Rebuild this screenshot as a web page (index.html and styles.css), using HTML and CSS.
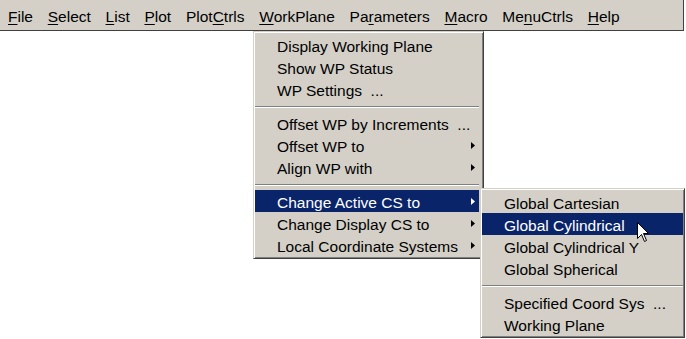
FILE: index.html
```html
<!DOCTYPE html>
<html>
<head>
<meta charset="utf-8">
<link rel="stylesheet" href="styles.css">
</head>
<body>
<div class="menubar">
  <span class="mi"><u>F</u>ile</span>
  <span class="mi"><u>S</u>elect</span>
  <span class="mi"><u>L</u>ist</span>
  <span class="mi"><u>P</u>lot</span>
  <span class="mi">Plot<u>C</u>trls</span>
  <span class="mi"><u>W</u>orkPlane</span>
  <span class="mi">Pa<u>r</u>ameters</span>
  <span class="mi"><u>M</u>acro</span>
  <span class="mi">Me<u>n</u>uCtrls</span>
  <span class="mi"><u>H</u>elp</span>
</div>

<div class="menu dropdown">
  <div class="row">Display Working Plane</div>
  <div class="row">Show WP Status</div>
  <div class="row">WP Settings &nbsp;...</div>
  <div class="sep"></div>
  <div class="row">Offset WP by Increments &nbsp;...</div>
  <div class="row sub">Offset WP to<svg class="arrow" width="4" height="7" viewBox="0 0 4 7"><polygon points="0,0 4,3.5 0,7"/></svg></div>
  <div class="row sub">Align WP with<svg class="arrow" width="4" height="7" viewBox="0 0 4 7"><polygon points="0,0 4,3.5 0,7"/></svg></div>
  <div class="sep"></div>
  <div class="row sub active">Change Active CS to<svg class="arrow" width="4" height="7" viewBox="0 0 4 7"><polygon points="0,0 4,3.5 0,7"/></svg></div>
  <div class="row sub">Change Display CS to<svg class="arrow" width="4" height="7" viewBox="0 0 4 7"><polygon points="0,0 4,3.5 0,7"/></svg></div>
  <div class="row sub">Local Coordinate Systems<svg class="arrow" width="4" height="7" viewBox="0 0 4 7"><polygon points="0,0 4,3.5 0,7"/></svg></div>
</div>

<div class="menu submenu">
  <div class="row">Global Cartesian</div>
  <div class="row active">Global Cylindrical</div>
  <div class="row">Global Cylindrical Y</div>
  <div class="row">Global Spherical</div>
  <div class="sep"></div>
  <div class="row">Specified Coord Sys &nbsp;...</div>
  <div class="row">Working Plane</div>
</div>

<svg class="cursor" width="13" height="21" viewBox="0 0 13 21">
  <path d="M0.5,0.5 L0.5,16.5 L4.5,12.5 L7.5,19.5 L9.5,18.5 L6.5,11.5 L11.5,11.5 Z" fill="#fff" stroke="#000" stroke-width="1" stroke-linejoin="miter"/>
</svg>
</body>
</html>
```
FILE: styles.css
```css
html, body {
  margin: 0;
  padding: 0;
  background: #fff;
}
body {
  font-family: "Liberation Sans", Arial, sans-serif;
  font-size: 15.5px;
  color: #000;
  width: 686px;
  height: 339px;
  overflow: hidden;
  position: relative;
}
.menubar {
  box-sizing: border-box;
  width: 684px;
  height: 31px;
  background: #d4d0c8;
  border-bottom: 1px solid #404040;
  border-right: 1px solid #404040;
  display: flex;
  gap: 14.75px;
  padding: 3px 0 0 8px;
  line-height: 27px;
}
.mi {
  white-space: nowrap;
}
.mi u {
  text-decoration-thickness: 1px;
  text-underline-offset: 2px;
}
.menu {
  position: absolute;
  box-sizing: border-box;
  background: #d4d0c8;
  border: 1px solid;
  border-color: #d4d0c8 #404040 #404040 #d4d0c8;
  box-shadow: inset 1px 1px #fff, inset -1px -1px #808080;
}
.dropdown {
  left: 253px;
  top: 31px;
  width: 231px;
  padding: 2px 4px 2px 1px;
}
.submenu {
  left: 480px;
  top: 188px;
  width: 205px;
  padding: 2px 1px 2px 1px;
}
.row {
  position: relative;
  height: 18px;
  line-height: 18px;
  padding: 4px 0 0 22px;
  white-space: nowrap;
}
.row.active {
  background: #0a246a;
  color: #fff;
}
.arrow {
  position: absolute;
  right: 4px;
  top: 8px;
  fill: #000;
}
.row.active .arrow {
  fill: #fff;
}
.sep {
  margin: 6px 0 4px 0;
  height: 1px;
  background: #808080;
  border-bottom: 1px solid #fff;
}
.cursor {
  position: absolute;
  left: 637px;
  top: 222px;
}
```
